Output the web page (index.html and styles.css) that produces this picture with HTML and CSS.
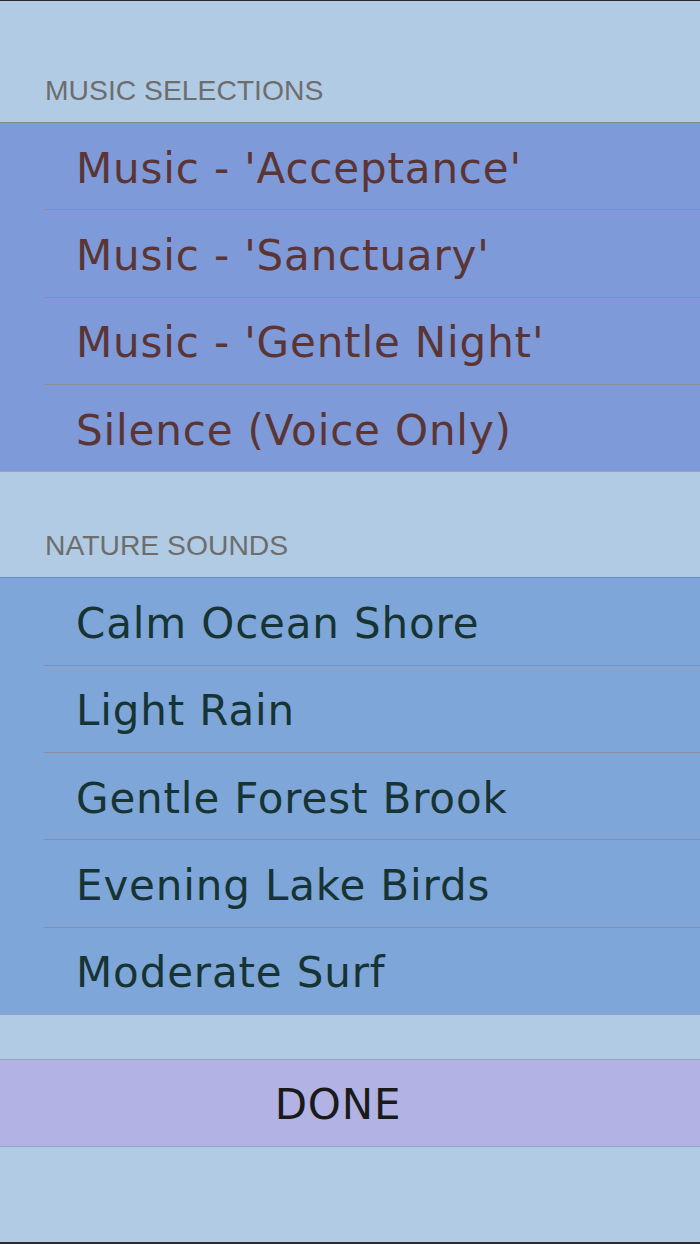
FILE: index.html
```html
<!DOCTYPE html>
<html>
<head>
<meta charset="utf-8">
<link rel="stylesheet" href="styles.css">
</head>
<body>
<div class="screen">
  <div class="header first">MUSIC SELECTIONS</div>
  <div class="group music">
    <div class="row">Music - 'Acceptance'</div>
    <div class="row">Music - 'Sanctuary'</div>
    <div class="row">Music - 'Gentle Night'</div>
    <div class="row last">Silence (Voice Only)</div>
  </div>
  <div class="header">NATURE SOUNDS</div>
  <div class="group nature">
    <div class="row">Calm Ocean Shore</div>
    <div class="row">Light Rain</div>
    <div class="row">Gentle Forest Brook</div>
    <div class="row">Evening Lake Birds</div>
    <div class="row last">Moderate Surf</div>
  </div>
  <div class="spacer"></div>
  <div class="done">DONE</div>
</div>
</body>
</html>
```
FILE: styles.css
```css
html, body {
  margin: 0;
  padding: 0;
}
body {
  width: 700px;
  height: 1244px;
  overflow: hidden;
  background: #b1cbe4;
}
.screen {
  box-sizing: border-box;
  width: 700px;
  height: 1244px;
  border-top: 1px solid #2a2a2a;
  border-bottom: 2px solid #2a2a2a;
  background: #b1cbe4;
  display: flex;
  flex-direction: column;
}
.header {
  box-sizing: border-box;
  height: 106px;
  flex: none;
  display: flex;
  align-items: flex-end;
  padding: 0 0 18px 45px;
  font-family: "Liberation Sans", Arial, sans-serif;
  font-size: 28.3px;
  line-height: 28px;
  color: #6d6d6d;
  border-bottom: 1px solid #8a8a8a;
}
.header.first {
  height: 122px;
}
.group {
  display: flex;
  flex-direction: column;
  flex: none;
}
.music {
  background: #7e9ad8;
  color: #5b3434;
}
.nature {
  background: #7fa6d9;
  color: #173434;
}
.row {
  box-sizing: border-box;
  height: 87.33px;
  margin-left: 44px;
  padding: 4px 0 0 32px;
  display: flex;
  align-items: center;
  font-family: "DejaVu Sans", Verdana, sans-serif;
  font-size: 42px;
  letter-spacing: 0.85px;
  border-bottom: 1px solid #8b8f9c;
}
.row.last {
  margin-left: 0;
  padding-left: 76px;
  border-bottom-color: #93a3bf;
}
.spacer {
  height: 44px;
  flex: none;
  border-bottom: 1px solid #98a4bc;
}
.done {
  box-sizing: border-box;
  height: 87px;
  flex: none;
  display: flex;
  align-items: center;
  justify-content: center;
  padding: 3px 24px 0 0;
  background: #b2b2e4;
  border-bottom: 1px solid #98a4bc;
  font-family: "DejaVu Sans", Verdana, sans-serif;
  font-size: 42px;
  letter-spacing: 0.8px;
  color: #1a1a1a;
}
```
